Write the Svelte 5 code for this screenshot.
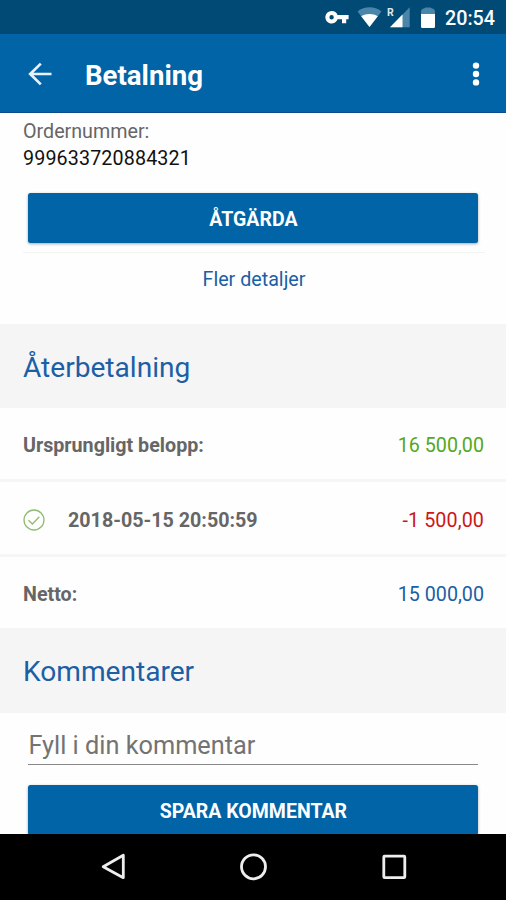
<script>
  const rows = [
    { label: 'Ursprungligt belopp:', amount: '16 500,00', tone: 'green' },
    { label: '2018-05-15 20:50:59', amount: '-1 500,00', tone: 'red', checked: true },
    { label: 'Netto:', amount: '15 000,00', tone: 'blue' }
  ];
</script>

<div class="screen">
  <div class="status">
    <svg class="icons" width="114" height="34" viewBox="0 0 114 34" aria-hidden="true">
      <path fill="#fff" fill-rule="evenodd" d="M6.7 11a6.3 6.3 0 0 1 5.9 4.1H23.6v4.2H21.2v4H17v-4H12.6A6.3 6.3 0 1 1 6.7 11zM6.6 15a2.2 2.2 0 1 0 0 4.4 2.2 2.2 0 0 0 0-4.4z" />
      <path fill="#4b86aa" d="M32.5 11.4C39.5 6 49.5 6 56.5 11.4L44.5 27z" />
      <path fill="#fff" d="M36.2 16.2C41 13.4 48 13.4 52.8 16.2L44.5 27z" />
      <path fill="#4b86aa" d="M84.7 7.3V27.3H65z" />
      <path fill="#fff" d="M77.5 14.6V27.3H65z" />
      <text x="62" y="16" class="roam">R</text>
      <path fill="#4b86aa" d="M96 14V12Q96 9 99 8.6L100.5 7.4H105.5L107 8.6Q110 9 110 12V14z" />
      <path fill="#fff" d="M96 14H110V26.5Q110 28 108.5 28H97.5Q96 28 96 26.5z" />
    </svg>
    <span class="clock">20:54</span>
  </div>

  <header>
    <svg class="back" width="24" height="24" viewBox="0 0 24 24" aria-label="Tillbaka">
      <path d="M12.8 1.6 2.2 12 12.8 22.4M2.4 12H23.5" fill="none" stroke="#e8f2fa" stroke-width="2.7" />
    </svg>
    <h1>Betalning</h1>
    <svg class="more" width="8" height="26" viewBox="0 0 8 26" aria-label="Meny">
      <circle cx="4" cy="4.6" r="3.2" /><circle cx="4" cy="13" r="3.2" /><circle cx="4" cy="21.4" r="3.2" />
    </svg>
  </header>

  <main>
    <section class="order">
      <div class="caption">Ordernummer:</div>
      <div class="number">999633720884321</div>
      <button class="action">ÅTGÄRDA</button>
      <div class="more-details"><span>Fler detaljer</span></div>
    </section>

    <h2 class="refund"><span>Återbetalning</span></h2>
    <ul>
      {#each rows as row}
        <li class:refunded={row.checked}>
          {#if row.checked}
            <svg class="check" width="22" height="22" viewBox="0 0 22 22" aria-hidden="true">
              <circle cx="11" cy="11" r="10" /><path d="M5.5 11.3 9.4 15 16.3 7.8" />
            </svg>
          {/if}
          <span class="label" class:date={row.checked}>{row.label}</span>
          <span class="amount {row.tone}">{row.amount}</span>
        </li>
      {/each}
    </ul>

    <h2 class="comments"><span>Kommentarer</span></h2>
    <section class="comment">
      <div class="field"><span>Fyll i din kommentar</span></div>
      <button class="save">SPARA KOMMENTAR</button>
    </section>
  </main>

  <nav>
    <svg width="506" height="66" viewBox="0 0 506 66" fill="none" stroke="#eee" aria-hidden="true">
      <path d="M123.3 21.3V43.7L103.2 32.7z" stroke-width="2.8" stroke-linejoin="round" />
      <circle cx="253.5" cy="32.8" r="12" stroke-width="2.8" />
      <rect x="383.8" y="22.2" width="21" height="21.4" rx=".8" stroke-width="2.8" />
    </svg>
  </nav>
</div>

<style>
  :global(body) { margin: 0; }
  .screen {
    width: 506px; height: 900px; overflow: hidden;
    display: flex; flex-direction: column;
    background: #fefefe; font-family: Roboto, "Liberation Sans", sans-serif;
    font-size: 19.7px; line-height: 26px; color: #666;
  }
  .status {
    height: 34px; flex: none; box-sizing: border-box; padding-right: 11px;
    display: flex; align-items: center; justify-content: flex-end;
    background: #004a75; color: #fff;
  }
  .icons { margin-right: 6px; }
  .roam { font: bold 10.5px Roboto, sans-serif; fill: #dce8f0; }
  .clock { font-size: 19.7px; font-weight: 500; padding-top: 3px; }
  header {
    height: 79px; flex: none; box-sizing: border-box; padding: 1px 26px 0 28px;
    display: flex; align-items: center; background: #0064a7;
    border-bottom: 1px solid #0b4d90; color: #fff;
  }
  h1 { margin: 4px 0 0 33px; font-size: 27.6px; line-height: 36px; font-weight: 700; flex: 1; }
  .more { fill: #fff; }
  main { flex: 1; min-height: 0; overflow: hidden; }
  .order { height: 211px; box-sizing: border-box; padding: 6px 21px 0 23px; }
  .number { color: #111; letter-spacing: .13px; padding-top: 1px; }
  button {
    display: block; border: 0; padding: 3px 0 0; margin: 0; width: 450px;
    border-radius: 2.5px; background: #0064a7; color: #fff;
    font: 700 19.5px/26px Roboto, "Liberation Sans", sans-serif;
    box-shadow: 0 1px 3px rgba(0, 0, 0, .35);
  }
  .action { height: 50px; margin: 21px 0 0 5.4px; }
  .more-details {
    margin-top: 9px; padding-top: 14px; border-top: 1px solid #f3f3f3;
    text-align: center; color: #1b5fa5;
  }
  h2 {
    margin: 0; padding-left: 23px; display: flex; align-items: center;
    background: #f5f5f5; color: #1b5fa5; font-weight: 400; font-size: 28.1px;
  }
  .refund { height: 84px; box-sizing: border-box; padding-top: 4px; }
  .comments { height: 85px; box-sizing: border-box; padding-top: 3px; }
  ul { margin: 0; padding: 0; list-style: none; }
  li {
    height: 75px; box-sizing: border-box; border-bottom: 3px solid #f6f6f6;
    padding: 4px 22px 0 23px; display: flex; align-items: center;
  }
  li:first-child { height: 74px; }
  li:last-child { height: 71px; border: 0; }
  .refunded { padding-top: 6px; }
  .check { fill: none; stroke: #8fbc70; stroke-width: 1.3; margin-top: -3px; }
  .label { font-weight: 700; flex: 1; }
  .date { padding-left: 23px; }
  .green { color: #55a81c; }
  .red { color: #cc1717; letter-spacing: .1px; }
  .blue { color: #1b5fa5; }
  .comment { padding: 0 28px 0 28.4px; }
  .field { height: 52px; box-sizing: border-box; padding-top: 20px; border-bottom: 1.5px solid #888; font-size: 25.3px; color: #737373; }
  .save { height: 50px; margin-top: 20px; }
  nav { height: 66px; flex: none; background: #000; }
  nav svg { display: block; }
</style>
